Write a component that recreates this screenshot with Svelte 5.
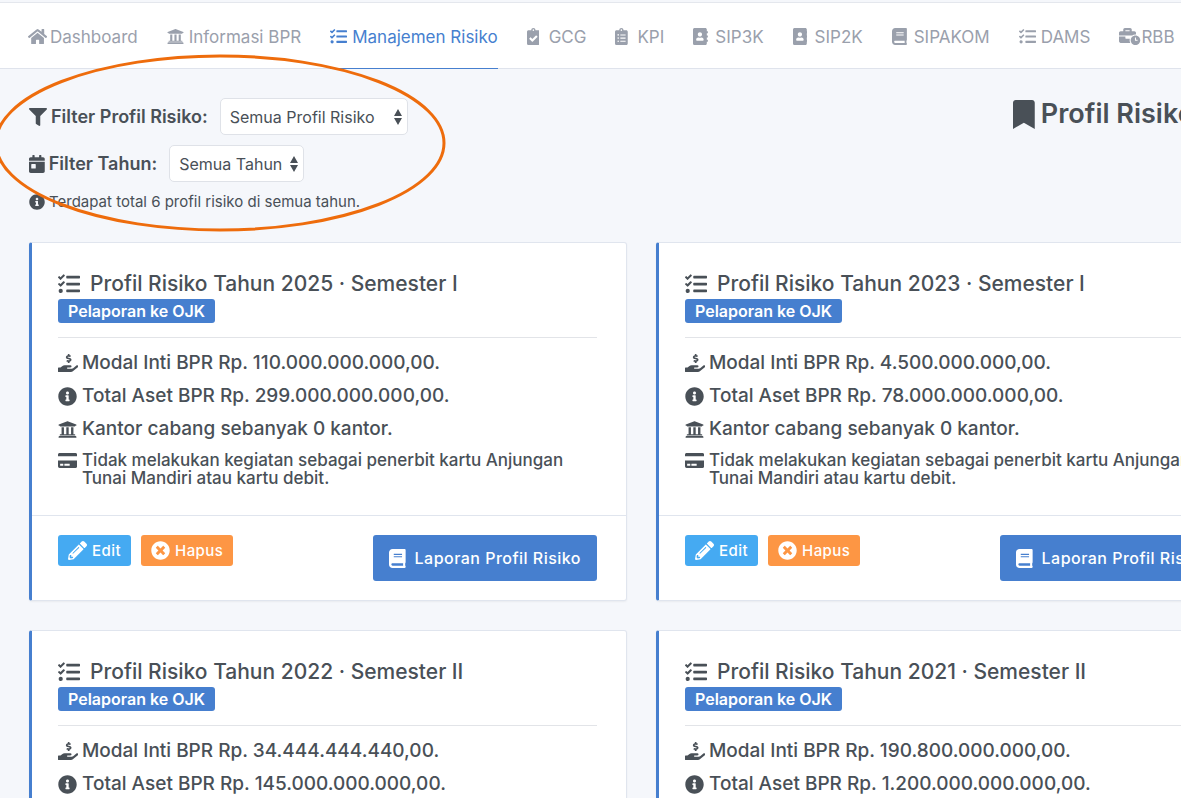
<script>
  const icons = {
    home: [576, 'M280.37 148.26L96 300.11V464a16 16 0 0 0 16 16l112.06-.29a16 16 0 0 0 15.92-16V368a16 16 0 0 1 16-16h64a16 16 0 0 1 16 16v95.64a16 16 0 0 0 16 16.05L464 480a16 16 0 0 0 16-16V300L295.67 148.26a12.19 12.19 0 0 0-15.3 0zM571.6 251.47L488 182.56V44.05a12 12 0 0 0-12-12h-56a12 12 0 0 0-12 12v72.61L318.47 43a48 48 0 0 0-61 0L4.34 251.47a12 12 0 0 0-1.6 16.9l25.5 31A12 12 0 0 0 45.15 301l235.22-193.74a12.19 12.19 0 0 1 15.3 0L530.9 301a12 12 0 0 0 16.9-1.6l25.5-31a12 12 0 0 0-1.7-16.93z'],
    bank: [512, 'M496 128v16a8 8 0 0 1-8 8h-24v12c0 6.627-5.373 12-12 12H60c-6.627 0-12-5.373-12-12v-12H24a8 8 0 0 1-8-8v-16a8 8 0 0 1 4.941-7.392l232-88a7.996 7.996 0 0 1 6.118 0l232 88A8 8 0 0 1 496 128zm-24 304H40c-13.255 0-24 10.745-24 24v16a8 8 0 0 0 8 8h464a8 8 0 0 0 8-8v-16c0-13.255-10.745-24-24-24zM96 192v192H60c-6.627 0-12 5.373-12 12v20h416v-20c0-6.627-5.373-12-12-12h-36V192h-64v192h-64V192h-64v192h-64V192H96z'],
    tasks: [512, 'M139.61 35.5a12 12 0 0 0-17 0L58.93 98.81l-22.7-22.12a12 12 0 0 0-17 0L3.53 92.41a12 12 0 0 0 0 17l47.59 47.4a12.78 12.78 0 0 0 17.61 0l15.59-15.62L156.52 69a12.09 12.09 0 0 0 .09-17zm0 159.19a12 12 0 0 0-17 0l-63.68 63.72-22.7-22.1a12 12 0 0 0-17 0L3.53 252a12 12 0 0 0 0 17L51 316.5a12.77 12.77 0 0 0 17.6 0l15.7-15.69 72.2-72.22a12 12 0 0 0 .09-16.9zM64 368c-26.49 0-48.59 21.5-48.59 48S37.53 464 64 464a48 48 0 0 0 0-96zm432 16H208a16 16 0 0 0-16 16v32a16 16 0 0 0 16 16h288a16 16 0 0 0 16-16v-32a16 16 0 0 0-16-16zm0-320H208a16 16 0 0 0-16 16v32a16 16 0 0 0 16 16h288a16 16 0 0 0 16-16V80a16 16 0 0 0-16-16zm0 160H208a16 16 0 0 0-16 16v32a16 16 0 0 0 16 16h288a16 16 0 0 0 16-16v-32a16 16 0 0 0-16-16z'],
    clipCheck: [384, 'M336 64h-80c0-35.3-28.7-64-64-64s-64 28.7-64 64H48C21.5 64 0 85.5 0 112v352c0 26.5 21.5 48 48 48h288c26.5 0 48-21.5 48-48V112c0-26.5-21.5-48-48-48zM192 40c13.3 0 24 10.7 24 24s-10.7 24-24 24-24-10.7-24-24 10.7-24 24-24zm121.2 231.8l-143 141.8c-4.7 4.7-12.3 4.6-17-.1l-82.6-83.3c-4.7-4.7-4.6-12.3.1-17L99.1 285c4.7-4.7 12.3-4.6 17 .1l46 46.4 106-105.2c4.7-4.7 12.3-4.6 17 .1l28.2 28.4c4.7 4.8 4.6 12.3-.1 17z'],
    clipList: [384, 'M336 64h-80c0-35.3-28.7-64-64-64s-64 28.7-64 64H48C21.5 64 0 85.5 0 112v352c0 26.5 21.5 48 48 48h288c26.5 0 48-21.5 48-48V112c0-26.5-21.5-48-48-48zM96 424c-13.3 0-24-10.7-24-24s10.7-24 24-24 24 10.7 24 24-10.7 24-24 24zm0-96c-13.3 0-24-10.7-24-24s10.7-24 24-24 24 10.7 24 24-10.7 24-24 24zm0-96c-13.3 0-24-10.7-24-24s10.7-24 24-24 24 10.7 24 24-10.7 24-24 24zm96-192c13.3 0 24 10.7 24 24s-10.7 24-24 24-24-10.7-24-24 10.7-24 24-24zm128 368c0 4.4-3.6 8-8 8H168c-4.4 0-8-3.6-8-8v-16c0-4.4 3.6-8 8-8h144c4.4 0 8 3.6 8 8v16zm0-96c0 4.4-3.6 8-8 8H168c-4.4 0-8-3.6-8-8v-16c0-4.4 3.6-8 8-8h144c4.4 0 8 3.6 8 8v16zm0-96c0 4.4-3.6 8-8 8H168c-4.4 0-8-3.6-8-8v-16c0-4.4 3.6-8 8-8h144c4.4 0 8 3.6 8 8v16z'],
    contacts: [448, 'M436 160c6.6 0 12-5.4 12-12v-40c0-6.6-5.4-12-12-12h-20V48c0-26.5-21.5-48-48-48H48C21.5 0 0 21.5 0 48v416c0 26.5 21.5 48 48 48h320c26.5 0 48-21.5 48-48v-48h20c6.6 0 12-5.4 12-12v-40c0-6.6-5.4-12-12-12h-20v-64h20c6.6 0 12-5.4 12-12v-40c0-6.6-5.4-12-12-12h-20v-64h20zm-228-32c35.3 0 64 28.7 64 64s-28.7 64-64 64-64-28.7-64-64 28.7-64 64-64zm112 236.8c0 10.6-10 19.2-22.4 19.2H118.4C106 384 96 375.4 96 364.8v-19.2c0-31.8 30.1-57.6 67.2-57.6h5c12.3 5.1 25.7 8 39.8 8s27.6-2.9 39.8-8h5c37.1 0 67.2 25.8 67.2 57.6v19.2z'],
    book: [448, 'M448 360V24c0-13.3-10.7-24-24-24H96C43 0 0 43 0 96v320c0 53 43 96 96 96h328c13.3 0 24-10.7 24-24v-16c0-7.5-3.5-14.3-8.9-18.7-4.2-15.4-4.2-59.3 0-74.7 5.4-4.3 8.9-11.1 8.9-18.6zM128 134c0-3.3 2.7-6 6-6h212c3.3 0 6 2.7 6 6v20c0 3.3-2.7 6-6 6H134c-3.3 0-6-2.7-6-6v-20zm0 64c0-3.3 2.7-6 6-6h212c3.3 0 6 2.7 6 6v20c0 3.3-2.7 6-6 6H134c-3.3 0-6-2.7-6-6v-20zm253.4 250H96c-17.7 0-32-14.3-32-32 0-17.6 14.4-32 32-32h285.4c-1.9 17.1-1.9 46.9 0 64z'],
    business: [640, 'M496 224c-79.59 0-144 64.41-144 144s64.41 144 144 144 144-64.41 144-144-64.41-144-144-144zm64 150.29c0 5.34-4.37 9.71-9.71 9.71h-60.57c-5.34 0-9.71-4.37-9.71-9.71v-76.57c0-5.34 4.37-9.71 9.71-9.71h12.57c5.34 0 9.71 4.37 9.71 9.71V352h38.29c5.34 0 9.71 4.37 9.71 9.71v12.58zM496 192c5.4 0 10.72.33 16 .81V144c0-25.6-22.4-48-48-48h-80V48c0-25.6-22.4-48-48-48H176c-25.6 0-48 22.4-48 48v48H48c-25.6 0-48 22.4-48 48v80h395.12c28.6-20.09 63.35-32 100.88-32zM320 96H192V64h128v32zm6.82 224H208c-8.84 0-16-7.16-16-16v-48H0v144c0 25.6 22.4 48 48 48h291.43C327.1 423.96 320 396.82 320 368c0-16.66 2.48-32.72 6.82-48z'],
    filter: [512, 'M487.976 0H24.028C2.71 0-8.047 25.866 7.058 40.971L192 225.941V432c0 7.831 3.821 15.17 10.237 19.662l80 55.98C298.02 518.69 320 507.493 320 487.98V225.941l184.947-184.97C520.021 25.896 509.338 0 487.976 0z'],
    calendar: [448, 'M0 464c0 26.5 21.5 48 48 48h352c26.5 0 48-21.5 48-48V192H0v272zm64-192c0-8.8 7.2-16 16-16h96c8.8 0 16 7.2 16 16v96c0 8.8-7.2 16-16 16H80c-8.8 0-16-7.2-16-16v-96zM400 64h-48V16c0-8.8-7.2-16-16-16h-32c-8.8 0-16 7.2-16 16v48H160V16c0-8.8-7.2-16-16-16h-32c-8.8 0-16 7.2-16 16v48H48C21.5 64 0 85.5 0 112v48h448v-48c0-26.5-21.5-48-48-48z'],
    info: [512, 'M256 8C119.043 8 8 119.083 8 256c0 136.997 111.043 248 248 248s248-111.003 248-248C504 119.083 392.957 8 256 8zm0 110c23.196 0 42 18.804 42 42s-18.804 42-42 42-42-18.804-42-42 18.804-42 42-42zm56 254c0 6.627-5.373 12-12 12h-88c-6.627 0-12-5.373-12-12v-24c0-6.627 5.373-12 12-12h12v-64h-12c-6.627 0-12-5.373-12-12v-24c0-6.627 5.373-12 12-12h64c6.627 0 12 5.373 12 12v100h12c6.627 0 12 5.373 12 12v24z'],
    bookmark: [384, 'M0 512V48C0 21.49 21.49 0 48 0h288c26.51 0 48 21.49 48 48v464L192 400 0 512z'],
    capital: [576, 'M271.06,144.3l54.27,14.3a8.59,8.59,0,0,1,6.63,8.1c0,4.6-4.09,8.4-9.12,8.4h-35.6a30,30,0,0,1-11.19-2.2c-5.24-2.2-11.28-1.7-15.3,2l-19,17.5a11.68,11.68,0,0,0-2.25,2.66,11.42,11.42,0,0,0,3.88,15.74,83.77,83.77,0,0,0,34.51,11.5V240c0,8.8,7.83,16,17.37,16h17.37c9.55,0,17.38-7.2,17.38-16V222.4c32.93-3.6,57.84-31,53.5-63-3.15-23-22.46-41.3-46.56-47.7L282.68,97.4a8.59,8.59,0,0,1-6.63-8.1c0-4.6,4.09-8.4,9.12-8.4h35.6A30,30,0,0,1,332,83.1c5.23,2.2,11.28,1.7,15.3-2l19-17.5A11.31,11.31,0,0,0,368.47,61a11.43,11.43,0,0,0-3.84-15.78,83.82,83.82,0,0,0-34.52-11.5V16c0-8.8-7.82-16-17.37-16H295.37C285.82,0,278,7.2,278,16V33.6c-32.89,3.6-57.85,31-53.51,63C227.63,119.6,247,137.9,271.06,144.3ZM565.27,328.1c-11.8-10.7-30.2-10-42.6,0L430.27,402a63.64,63.64,0,0,1-40,14H272a16,16,0,0,1,0-32h78.29c15.9,0,30.71-10.9,33.25-26.6a31.2,31.2,0,0,0,.46-5.46A32,32,0,0,0,352,320H192a117.66,117.66,0,0,0-74.1,26.29L71.4,384H16A16,16,0,0,0,0,400v96a16,16,0,0,0,16,16H372.77a64,64,0,0,0,40-14L564,377a32,32,0,0,0,1.28-48.9Z'],
    card: [576, 'M0 432c0 26.5 21.5 48 48 48h480c26.5 0 48-21.5 48-48V256H0v176zm192-68c0-6.6 5.4-12 12-12h136c6.6 0 12 5.4 12 12v40c0 6.6-5.4 12-12 12H204c-6.6 0-12-5.4-12-12v-40zm-128 0c0-6.6 5.4-12 12-12h72c6.6 0 12 5.4 12 12v40c0 6.6-5.4 12-12 12H76c-6.6 0-12-5.4-12-12v-40zM576 80v48H0V80c0-26.5 21.5-48 48-48h480c26.5 0 48 21.5 48 48z'],
    pencil: [512, 'M497.9 142.1l-46.1 46.1c-4.7 4.7-12.3 4.7-17 0l-111-111c-4.7-4.7-4.7-12.3 0-17l46.1-46.1c18.7-18.7 49.1-18.7 67.9 0l60.1 60.1c18.8 18.7 18.8 49.1 0 67.9zM284.2 99.8L21.6 362.4.4 483.9c-2.9 16.4 11.4 30.6 27.8 27.8l121.5-21.3 262.6-262.6c4.7-4.7 4.7-12.3 0-17l-111-111c-4.8-4.7-12.4-4.7-17.1 0zM124.1 339.9c-5.5-5.5-5.5-14.3 0-19.8l154-154c5.5-5.5 14.3-5.5 19.8 0s5.5 14.3 0 19.8l-154 154c-5.5 5.5-14.3 5.5-19.8 0zM88 424h48v36.3l-64.5 11.3-31.1-31.1L51.7 376H88v48z'],
    times: [512, 'M256 8C119 8 8 119 8 256s111 248 248 248 248-111 248-248S393 8 256 8zm121.6 313.1c4.7 4.7 4.7 12.3 0 17L338 377.6c-4.7 4.7-12.3 4.7-17 0L256 312l-65.1 65.6c-4.7 4.7-12.3 4.7-17 0L134.4 338c-4.7-4.7-4.7-12.3 0-17l65.6-65-65.6-65.1c-4.7-4.7-4.7-12.3 0-17l39.6-39.6c4.7-4.7 12.3-4.7 17 0l65 65.7 65.1-65.6c4.7-4.7 12.3-4.7 17 0l39.6 39.6c4.7 4.7 4.7 12.3 0 17L312 256l65.6 65.1z']
  };

  const nav = [
    ['home', 'Dashboard'],
    ['bank', 'Informasi BPR'],
    ['tasks', 'Manajemen Risiko'],
    ['clipCheck', 'GCG'],
    ['clipList', 'KPI'],
    ['contacts', 'SIP3K'],
    ['contacts', 'SIP2K'],
    ['book', 'SIPAKOM'],
    ['tasks', 'DAMS'],
    ['business', 'RBB']
  ];

  const profiles = [
    { period: '2025 · Semester I', capital: '110.000.000.000,00', assets: '299.000.000.000,00' },
    { period: '2023 · Semester I', capital: '4.500.000.000,00', assets: '78.000.000.000,00' },
    { period: '2022 · Semester II', capital: '34.444.444.440,00', assets: '145.000.000.000,00' },
    { period: '2021 · Semester II', capital: '190.800.000.000,00', assets: '1.200.000.000.000,00' }
  ];
</script>

{#snippet icon(name, size)}
  <svg class="icon {size}" viewBox="0 0 {icons[name][0]} 512" aria-hidden="true"><path d={icons[name][1]} /></svg>
{/snippet}

<div class="page">
  <header>
    <nav>
      {#each nav as [glyph, label]}
        <a href="#top" class:active={label === 'Manajemen Risiko'}>
          <span class="slot">{@render icon(glyph, 'i17')}</span>{label}
        </a>
      {/each}
    </nav>
  </header>

  <main>
    <div class="heading">
      <form>
        <div class="filter">
          <label for="profile">{@render icon('filter', 'i18')}Filter Profil Risiko:</label>
          <select id="profile" class="wide"><option>Semua Profil Risiko</option></select>
        </div>
        <div class="filter">
          <label for="year">{@render icon('calendar', 'i18')}Filter Tahun:</label>
          <select id="year"><option>Semua Tahun</option></select>
        </div>
        <p class="note">{@render icon('info', 'i16')}Terdapat total 6 profil risiko di semua tahun.</p>
      </form>
      <h1>{@render icon('bookmark', 'i29')}Profil Risiko</h1>
      <svg class="marker" viewBox="0 0 452 178" aria-hidden="true">
        <ellipse cx="226" cy="89" rx="224" ry="87" />
      </svg>
    </div>

    <div class="grid">
      {#each profiles as p}
        <article>
          <div class="body">
            <h2>{@render icon('tasks', 'i22')}Profil Risiko Tahun {p.period}</h2>
            <span class="badge">Pelaporan ke OJK</span>
            <hr />
            <ul>
              <li><span class="slot">{@render icon('capital', 'i18')}</span>Modal Inti BPR Rp. {p.capital}.</li>
              <li><span class="slot">{@render icon('info', 'i19')}</span>Total Aset BPR Rp. {p.assets}.</li>
              <li><span class="slot">{@render icon('bank', 'i19')}</span>Kantor cabang sebanyak 0 kantor.</li>
              <li class="small"><span class="slot">{@render icon('card', 'i17')}</span>Tidak melakukan kegiatan sebagai penerbit kartu Anjungan Tunai Mandiri atau kartu debit.</li>
            </ul>
          </div>
          <footer>
            <button type="button" class="edit">{@render icon('pencil', 'i19')}Edit</button>
            <button type="button" class="delete">{@render icon('times', 'i19')}Hapus</button>
            <button type="button" class="report">{@render icon('book', 'i19')}Laporan Profil Risiko</button>
          </footer>
        </article>
      {/each}
    </div>
  </main>
</div>

<style>
  :global(body) {
    margin: 0;
    overflow: hidden;
    background: #f5f7fb;
    color: #495057;
    font-family: Inter, "Liberation Sans", sans-serif;
    font-size: 17px;
  }
  .page {
    min-width: 1283px;
  }
  .icon {
    display: block;
    flex: none;
    fill: currentColor;
    height: 17px;
  }
  .i16 { height: 16px; }
  .i18 { height: 18px; }
  .i19 { height: 19px; }
  .i22 { height: 22px; }
  .i29 { height: 29px; }

  header {
    margin-top: 2px;
    padding: 0 28px;
    background: #fff;
    border-top: 1px solid #e4e7ed;
    border-bottom: 1px solid #dfe3ec;
  }
  nav {
    display: flex;
    gap: 29px;
    margin-bottom: -1px;
  }
  nav a {
    box-sizing: border-box;
    display: flex;
    align-items: center;
    height: 66px;
    padding-top: 2px;
    border-bottom: 1px solid transparent;
    color: #9aa0ac;
    text-decoration: none;
    white-space: nowrap;
  }
  nav a.active {
    color: #467fcf;
    border-bottom-color: #467fcf;
  }
  nav .slot {
    width: 22px;
  }

  main {
    padding: 29px 29px 0;
  }
  .heading {
    position: relative;
    display: flex;
    justify-content: space-between;
    align-items: flex-start;
  }
  form {
    display: flex;
    flex-direction: column;
    gap: 10px;
  }
  .filter {
    display: flex;
    align-items: center;
    gap: 12px;
  }
  label {
    display: flex;
    align-items: center;
    gap: 4px;
    font-size: 18px;
    font-weight: 600;
  }
  select {
    appearance: none;
    box-sizing: border-box;
    height: 37px;
    width: 135px;
    padding: 0 9px;
    border: 1px solid #dfe2e8;
    border-radius: 5px;
    background: #fff url("data:image/svg+xml,%3Csvg xmlns='http://www.w3.org/2000/svg' viewBox='0 0 8 16'%3E%3Cpath fill='%23495057' d='M0 7L4 0l4 7zM0 9h8l-4 7z'/%3E%3C/svg%3E") no-repeat right 5px center / 8px 16px;
    color: #495057;
    font: inherit;
    font-size: 16px;
  }
  select.wide {
    width: 188px;
  }
  .note {
    display: flex;
    align-items: center;
    gap: 4px;
    margin: 0;
    font-size: 15px;
    line-height: 20px;
  }
  h1 {
    display: flex;
    align-items: center;
    gap: 6px;
    width: 241px;
    margin: 0;
    font-size: 27px;
    font-weight: 600;
    line-height: 32px;
    white-space: nowrap;
  }
  .marker {
    position: absolute;
    top: -44px;
    left: -35px;
    width: 452px;
    height: 178px;
    pointer-events: none;
  }
  .marker ellipse {
    fill: none;
    stroke: #ee6c0c;
    stroke-width: 3;
  }

  .grid {
    display: grid;
    grid-template-columns: 1fr 1fr;
    gap: 29px;
    padding-top: 30px;
  }
  article {
    background: #fff;
    border: 1px solid #e0e5ee;
    border-left: 3px solid #467fcf;
    border-radius: 3px;
    box-shadow: 0 1px 2px rgba(0, 0, 0, 0.05);
  }
  .body {
    padding: 28px 29px 28px 26px;
  }
  h2 {
    display: flex;
    align-items: center;
    gap: 10px;
    margin: 0;
    font-size: 21px;
    font-weight: 500;
    line-height: 26px;
  }
  .badge {
    display: block;
    width: max-content;
    margin-top: 2px;
    padding: 0 10px;
    border-radius: 3px;
    background: #467fcf;
    color: #fff;
    font-size: 16px;
    font-weight: 600;
    line-height: 24px;
  }
  hr {
    height: 1px;
    margin: 14px 0 13px;
    border: 0;
    background: #e2e4e8;
  }
  ul {
    display: grid;
    gap: 9px;
    margin: 0;
    padding: 0;
    list-style: none;
  }
  li {
    display: flex;
    font-size: 19px;
    font-weight: 500;
    line-height: 24px;
  }
  li .slot {
    display: flex;
    flex: none;
    align-items: center;
    width: 24px;
    height: 24px;
  }
  li.small {
    margin-top: 1px;
    font-size: 17px;
    line-height: 18px;
  }
  li.small .slot {
    height: 18px;
  }
  footer {
    display: flex;
    align-items: flex-start;
    gap: 10px;
    padding: 19px 29px 19px 26px;
    border-top: 1px solid #e0e5ee;
  }
  button {
    display: flex;
    align-items: center;
    gap: 5px;
    height: 31px;
    padding: 0 10px;
    border: 0;
    border-radius: 3px;
    color: #fff;
    font: 500 15px Inter, "Liberation Sans", sans-serif;
    letter-spacing: 0.03em;
  }
  .edit { background: #45aaf2; }
  .delete { background: #fd9644; }
  .report {
    gap: 9px;
    height: 46px;
    margin-left: auto;
    padding: 0 16px;
    background: #467fcf;
    font-size: 16px;
  }
</style>
